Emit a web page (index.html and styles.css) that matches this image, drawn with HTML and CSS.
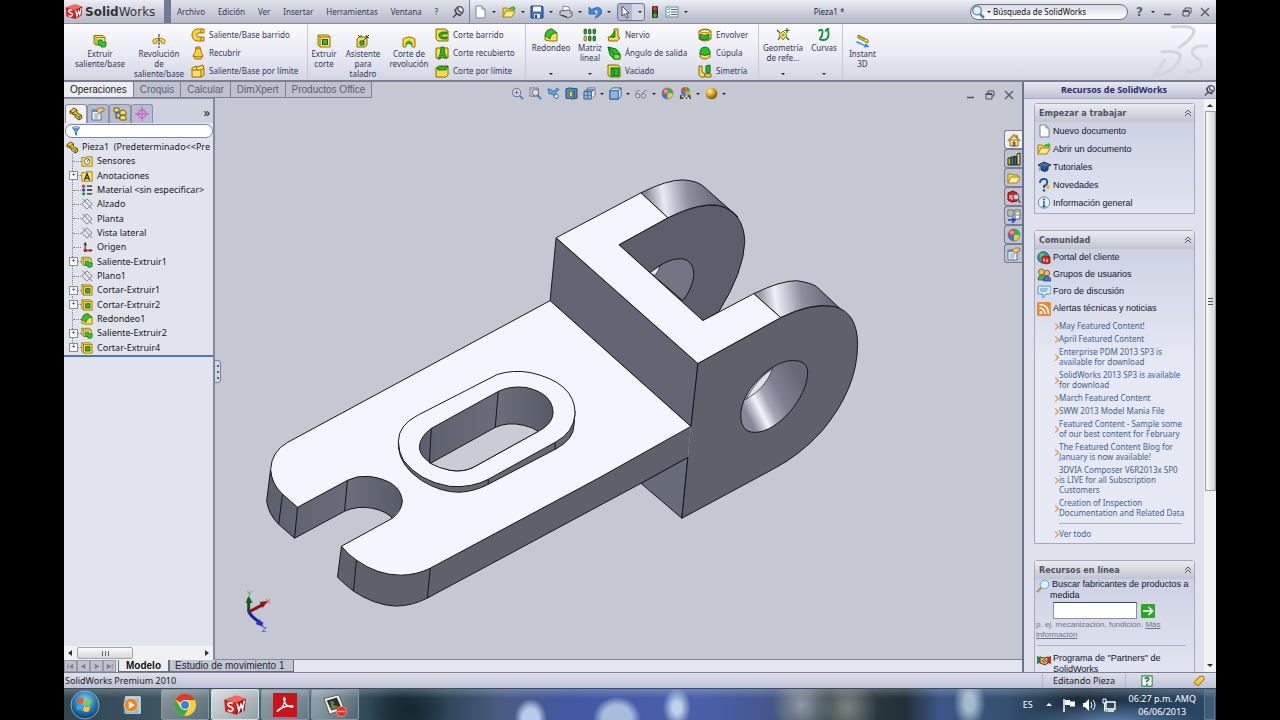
FILE: index.html
```html
<!DOCTYPE html>
<html lang="es">
<head>
<meta charset="utf-8">
<title>SolidWorks - Pieza1</title>
<link rel="stylesheet" href="styles.css">
</head>
<body>
<svg class="defs" aria-hidden="true">
  <defs>
    <linearGradient id="capA" gradientUnits="userSpaceOnUse" x1="648" y1="206" x2="722" y2="196"><stop offset="0" stop-color="#8b8d9e"/><stop offset=".22" stop-color="#e8eaf3"/><stop offset=".55" stop-color="#8d8f9f"/><stop offset="1" stop-color="#626473"/></linearGradient>
    <linearGradient id="capB" gradientUnits="userSpaceOnUse" x1="762" y1="307" x2="836" y2="297"><stop offset="0" stop-color="#9a9cac"/><stop offset=".2" stop-color="#eef0f8"/><stop offset=".55" stop-color="#8d8f9f"/><stop offset="1" stop-color="#626473"/></linearGradient>
    <linearGradient id="bore" gradientUnits="userSpaceOnUse" x1="744" y1="408" x2="800" y2="380"><stop offset="0" stop-color="#85879a"/><stop offset=".1" stop-color="#b5b7c6"/><stop offset=".22" stop-color="#f4f4fa"/><stop offset=".38" stop-color="#a3a5b5"/><stop offset=".6" stop-color="#7f8192"/><stop offset="1" stop-color="#666877"/></linearGradient>
    <linearGradient id="wall" x1="0" x2="1"><stop offset="0" stop-color="#5c5f6d"/><stop offset=".6" stop-color="#6b6d7b"/><stop offset="1" stop-color="#565966"/></linearGradient>
    <radialGradient id="orb" cx=".5" cy=".35" r=".65"><stop offset="0" stop-color="#8fd6f0"/><stop offset=".6" stop-color="#2478b5"/><stop offset="1" stop-color="#0f3863"/></radialGradient>
    <radialGradient id="gold" cx=".35" cy=".3" r=".7"><stop offset="0" stop-color="#fff3b0"/><stop offset=".5" stop-color="#d9a520"/><stop offset="1" stop-color="#7d5a0c"/></radialGradient>
  </defs>
  <symbol id="i-page" viewBox="0 0 14 14"><path d="M3 1h6l3 3v9H3z" fill="#fdfeff" stroke="#6f87a8"/><path d="M9 1v3h3" fill="#c9d9ee" stroke="#6f87a8"/></symbol>
  <symbol id="i-open" viewBox="0 0 14 14"><path d="M1 12V3h4l1 1h5v3" fill="#f2cf4a" stroke="#a58214"/><path d="M1 12l3-6h9l-3 6z" fill="#ffec86" stroke="#a58214"/><path d="M7 4q2-3 4-2V.5l3 3-3 2.500V4q-2-1-3 1z" fill="#35b82f"/></symbol>
  <symbol id="i-folder" viewBox="0 0 14 14"><path d="M1 12V3h4l1 1h5v3" fill="#f5d663" stroke="#a58214"/><path d="M1 12l3-6h9l-3 6z" fill="#fff0a0" stroke="#a58214"/></symbol>
  <symbol id="i-save" viewBox="0 0 14 14"><path d="M1 1h11l1 1v11H1z" fill="#3c6fc4" stroke="#204080"/><path d="M3 1.500h8v5H3z" fill="#f4f8ff"/><path d="M4 9h6v4H4z" fill="#dfe6f2"/><path d="M5 10h2v3H5z" fill="#204080"/></symbol>
  <symbol id="i-print" viewBox="0 0 14 14"><path d="M4 6V1l6 1 1 4z" fill="#fff" stroke="#7a8fae"/><path d="M1 6l9-1 3 2v4l-4 2-8-3z" fill="#c8cbd4" stroke="#5b5f6c"/><path d="M3 10l5 2" stroke="#333"/><path d="M10 8h2" stroke="#d7a72c" stroke-width="2"/></symbol>
  <symbol id="i-undo" viewBox="0 0 14 14"><path d="M1 2v7h7L5.500 6.500Q8 3.500 10 5q1.500 3-3 8 7-2 6.500-7.500Q12 0 3.500 4.500z" fill="#3d8cd8" stroke="#1b4f96" stroke-width=".7"/></symbol>
  <symbol id="i-cursor" viewBox="0 0 14 14"><path d="M4 1v10l2.500-2.300L8.500 13l1.700-.8-2-4H11z" fill="#fff" stroke="#444" stroke-width=".9"/></symbol>
  <symbol id="i-light" viewBox="0 0 14 14"><rect x="4" y="1" width="6" height="12" rx="1" fill="#333"/><circle cx="7" cy="3.500" r="2" fill="#e23b2c"/><circle cx="7" cy="7" r="1.300" fill="#65551b"/><circle cx="7" cy="10.500" r="2" fill="#30b932"/></symbol>
  <symbol id="i-opts" viewBox="0 0 14 14"><path d="M1 2h12v10H1z" fill="#eff6f6" stroke="#5f8d93"/><path d="M6 4.500h6M6 7h6M6 9.500h6" stroke="#4d6a80"/><path d="M2.500 4l1 1 1.500-2M2.500 7l1 1 1.500-2M2.500 10l1 1 1.500-2" fill="none" stroke="#31875a" stroke-width=".8"/></symbol>
  <symbol id="i-pin" viewBox="0 0 14 14"><circle cx="8.500" cy="5.500" r="3.800" fill="#e6e8f0" stroke="#4b4e5c" stroke-width="1.300"/><path d="M4 4q0 6 6 6.500M7 2.500q-1 4 4 5M5.500 9L2 12.500" fill="none" stroke="#4b4e5c" stroke-width="1.500"/></symbol>
  <symbol id="i-sw" viewBox="0 0 24 20"><path d="M2 5L13 1l9 3-9 4z" fill="#f2685e"/><path d="M2 5l11 3v11L3 16z" fill="#d51e1e"/><path d="M22 4l-9 4v11l8-4z" fill="#a80f12"/><path d="M10 8.500q-5-1.500-4.500 1 .5 1.600 3 2.500t1 3-4-.5" fill="none" stroke="#fff" stroke-width="1.700"/><path d="M14 8.500l1.500 7 2-6 1.500 4.500 1.500-8" fill="none" stroke="#fff" stroke-width="1.500"/></symbol>
  <symbol id="i-boss" viewBox="0 0 14 14"><path d="M1 1.500h9l2 2V11H3l-2-2z" fill="#f4e27a" stroke="#8d7313"/><path d="M1 1.500l2 2h9M3 3.500V11" fill="none" stroke="#8d7313" stroke-width=".8"/><path d="M5 6h4v2h4v4l-1 1H8v-2H5z" fill="#35c438" stroke="#137018" stroke-width=".8"/></symbol>
  <symbol id="i-cut" viewBox="0 0 14 14"><path d="M1 1h10l2 2v10H3l-2-2z" fill="#ffe25a" stroke="#8d7313"/><path d="M1 1l2 2h10M3 3v10" fill="none" stroke="#8d7313"/><rect x="5.500" y="5.500" width="5" height="5" fill="#37b63b" stroke="#4c4b10"/></symbol>
  <symbol id="i-rev" viewBox="0 0 14 14"><path d="M1 9V6q6-4 12 0v3q-2 2-3.500 0V7h-5v2Q3 11 1 9z" fill="#ffd84e" stroke="#8d6b13" stroke-width=".8"/><path d="M7 0v14" stroke="#222" stroke-dasharray="3 1"/></symbol>
  <symbol id="i-sweep" viewBox="0 0 14 14"><path d="M13 1H6Q1 2 1 7t5 6h7V9H7q-3-2 0-4h6z" fill="#ffd33a" stroke="#9b7010"/><path d="M10 1v4M10 9v4" stroke="#9b7010"/></symbol>
  <symbol id="i-loft" viewBox="0 0 14 14"><path d="M5 1h4q1 6 3 9l-2 3H4l-2-3q3-3 3-9z" fill="#ffd33a" stroke="#9b7010"/><path d="M5 2q2 2 4 0M2 10q5 2 10 0" fill="none" stroke="#9b7010"/></symbol>
  <symbol id="i-bound" viewBox="0 0 14 14"><path d="M1 4l4-2 1 1 6-2 1 4v6l-3 2H1z" fill="#ffe056" stroke="#8d6b13"/><path d="M1 6h9v7M10 6l3-2M5 2l1 4" fill="none" stroke="#8d6b13"/></symbol>
  <symbol id="i-wizard" viewBox="0 0 14 14"><path d="M1 5l2-2h8v8l-2 2H1z" fill="#f1dc55" stroke="#7d6d17"/><path d="M4 7h4v4H4z" fill="#40ad3c" stroke="#35641b"/><path d="M7 7l6-6M10 1l1 2M13 4l-2-1M2 1l2 2M5 1v2" stroke="#36362c"/></symbol>
  <symbol id="i-revcut" viewBox="0 0 14 14"><path d="M1 5q6-4 12 0v8h-3V9q-3-4-6 0v4H1z" fill="#ffd944" stroke="#9b7010"/><path d="M4 12V9q3-4 6 0v3q-3-4-6 0z" fill="#28b52c"/></symbol>
  <symbol id="i-cutsweep" viewBox="0 0 14 14"><path d="M1 1h9l3 2v10H3L1 11z" fill="#ffdc45" stroke="#806610"/><path d="M12 4H7Q3 5 4 8t4 3h4V9H8q-3-1 0-3h4z" fill="#27b52b" stroke="#0d6a16" stroke-width=".8"/></symbol>
  <symbol id="i-cutloft" viewBox="0 0 14 14"><path d="M1 2h12v10H1z" fill="#ffdc45" stroke="#806610"/><path d="M6 1h3q0 7 3 11H9L7 9l-2 4H3q3-5 3-12z" fill="#27b52b" stroke="#0d6a16" stroke-width=".8"/></symbol>
  <symbol id="i-cutbound" viewBox="0 0 14 14"><path d="M1 4l3-2h9v9l-2 2H1z" fill="#ffdc45" stroke="#806610"/><path d="M2 4l5-2 1 1 5-1-2 4H3z" fill="#27b52b" stroke="#0d6a16" stroke-width=".8"/></symbol>
  <symbol id="i-fillet" viewBox="0 0 14 14"><path d="M1 12V7q1-6 7-6l5 4v8H6z" fill="#ffe154" stroke="#8d7313"/><path d="M1 8q1-7 7-7l5 4q-6 0-7 6z" fill="#37bf35" stroke="#146c18" stroke-width=".8"/></symbol>
  <symbol id="i-pattern" viewBox="0 0 14 14"><g fill="#27a82b" stroke="#14401a" stroke-width=".7"><rect x="1" y="1" width="2.500" height="5" rx="1"/><rect x="5.500" y="1" width="2.500" height="5" rx="1"/><rect x="10" y="1" width="2.500" height="5" rx="1"/><rect x="5.500" y="8" width="2.500" height="5" rx="1"/><rect x="10" y="8" width="2.500" height="5" rx="1"/></g><rect x="1" y="8" width="2.500" height="5" rx="1" fill="#e5cf3e" stroke="#5b5210" stroke-width=".7"/></symbol>
  <symbol id="i-rib" viewBox="0 0 14 14"><path d="M7 1h4v8l2 1-3 3H2L1 9h6z" fill="#ffdc45" stroke="#806610"/><path d="M3 9l5-6v6z" fill="#27b52b" stroke="#0d6a16" stroke-width=".8"/></symbol>
  <symbol id="i-draft" viewBox="0 0 14 14"><path d="M1 1l8 2 4 5v5H7L3 9z" fill="#27c22b" stroke="#0d6a16"/><path d="M7 8l6 1v4H7z" fill="#8de04a" stroke="#0d6a16" stroke-width=".8"/><path d="M1 1l6 7" fill="none" stroke="#0d6a16"/></symbol>
  <symbol id="i-shell" viewBox="0 0 14 14"><path d="M1 1h10l2 2v10H3l-2-2z" fill="#ffdc45" stroke="#806610"/><path d="M4 4h8v8H4z" fill="#1fbd2a" stroke="#0d6a16"/><path d="M4 4l3 2v6" fill="none" stroke="#0d6a16"/></symbol>
  <symbol id="i-wrap" viewBox="0 0 14 14"><path d="M1 3q6-4 12 0v8q-6 4-12 0z" fill="#ffdc45" stroke="#806610"/><path d="M2 6q5 3 9 0v5q-5 2-9 0z" fill="#27b52b" stroke="#0d6a16" stroke-width=".8"/><ellipse cx="7" cy="3.200" rx="5" ry="1.500" fill="#fff09a" stroke="#806610" stroke-width=".7"/></symbol>
  <symbol id="i-dome" viewBox="0 0 14 14"><path d="M2 7v4q5 4 10 0V7z" fill="#ffdc45" stroke="#806610"/><path d="M2 8V5q1-4 5-4t5 4v3q-5 3-10 0z" fill="#27c22b" stroke="#0d6a16" stroke-width=".8"/></symbol>
  <symbol id="i-mirror" viewBox="0 0 14 14"><path d="M1 2h3v6l3 2v3H3l-2-2z" fill="#ffdc45" stroke="#806610"/><path d="M8 2l4-1v8H8z" fill="#27b52b" stroke="#0d6a16"/><path d="M6 10h7v3H8z" fill="#ffdc45" stroke="#806610"/></symbol>
  <symbol id="i-refgeo" viewBox="0 0 14 14"><path d="M3 7l4-4 4 4-4 5z" fill="#f3e04a" stroke="#8f8112"/><path d="M1 2l3 3M2 12l2-3M13 12l-3-3M11 0v5M8.500 2.500h5" stroke="#23612b" stroke-width="1.200"/><circle cx="7" cy="7" r="1.300" fill="#a88"/></symbol>
  <symbol id="i-curves" viewBox="0 0 14 14"><path d="M1.500 3q4-3 4 1t-2 6 3 2 5-6-2-4 1.500-1.500 3-.5" fill="none" stroke="#15903b" stroke-width="1.900"/></symbol>
  <symbol id="i-instant" viewBox="0 0 14 14"><path d="M2 1l10 5v3L2 4z" fill="#ffe154" stroke="#77651a" stroke-width=".9"/><path d="M4 2v2M6 3v2M8 4v2" stroke="#77651a"/><path d="M1 7l8 4 .5-2 4 4-6 .5 1-1.500L0 8.500z" fill="#2c8be0"/></symbol>
  <symbol id="i-zoom" viewBox="0 0 14 14"><circle cx="6" cy="6" r="4.500" fill="#d3d8e2" stroke="#5b6577"/><path d="M6 3.500v5M3.500 6h5" stroke="#6c7789"/><path d="M9.500 9.500l3.500 3.500" stroke="#3f7fc0" stroke-width="2"/></symbol>
  <symbol id="i-zoomarea" viewBox="0 0 14 14"><path d="M1 1h9v9H1z" fill="none" stroke="#555" stroke-dasharray="2 1"/><circle cx="7" cy="6" r="3.500" fill="#d9dee7" stroke="#5b6577"/><path d="M9.500 9l3.500 4" stroke="#3f7fc0" stroke-width="2"/></symbol>
  <symbol id="i-prev" viewBox="0 0 14 14"><path d="M1 2q4 0 6 3l4-4 2 2-4 3 3 5-2 2-4-5-4-1z" fill="#5ca5dc" stroke="#285e96" stroke-width=".8"/><circle cx="10" cy="10" r="2.300" fill="#d4e9f8" stroke="#285e96" stroke-width=".8"/></symbol>
  <symbol id="i-section" viewBox="0 0 14 14"><path d="M1 2l4-1 8 1v10l-4 1-8-1z" fill="#4e91c4" stroke="#25496b"/><path d="M5 4l3 1v6l-3-1z" fill="#f3d75a" stroke="#7b6719"/><path d="M10 3v9" stroke="#25496b"/></symbol>
  <symbol id="i-orient" viewBox="0 0 14 14"><path d="M5 4V1h8v8l-3 3" fill="#e6eef7" stroke="#59708a"/><path d="M1 5h8v8H1zM1 5l3-2h8L9 5" fill="#8fb8dd" stroke="#375b82"/><path d="M5 5v8M1 9h8" stroke="#375b82" stroke-width=".7"/></symbol>
  <symbol id="i-display" viewBox="0 0 14 14"><path d="M1 4l3-3h9v9l-3 3H1z" fill="#d8eafb" stroke="#33567d"/><path d="M1 4h9v9H1z" fill="#86b6e6" stroke="#33567d"/><path d="M10 4l3-3" stroke="#33567d"/></symbol>
  <symbol id="i-glasses" viewBox="0 0 14 14"><path d="M1 8Q1 3 5 4M8 8q1-5 5-4" fill="none" stroke="#777b87"/><circle cx="3" cy="9.500" r="2.300" fill="#d7dae2" stroke="#666a77"/><circle cx="9" cy="9.500" r="2.300" fill="#d7dae2" stroke="#666a77"/></symbol>
  <symbol id="i-ball" viewBox="0 0 14 14"><path d="M7 7V1a6 6 0 0 1 6 6z" fill="#3fae49"/><path d="M7 7h6a6 6 0 0 1-6 6z" fill="#f0c63c"/><path d="M7 7v6a6 6 0 0 1-6-6z" fill="#3d78cf"/><path d="M7 7H1a6 6 0 0 1 6-6z" fill="#e04436"/><circle cx="5" cy="4.500" r="2" fill="#fff" opacity=".45"/><circle cx="7" cy="7" r="6" fill="none" stroke="#5c6577" stroke-width=".6"/></symbol>
  <symbol id="i-scene" viewBox="0 0 14 14"><path d="M1 9l3-1h8l1 5H1z" fill="#444"/><path d="M3 9h2v2H3zM7 9h2v2H7zM5 11h2v2H5zM9 11h2v2H9z" fill="#fff"/><path d="M7 5V0a5 5 0 0 1 5 5z" fill="#3fae49"/><path d="M7 5h5a5 5 0 0 1-5 5z" fill="#e0a83c"/><path d="M7 5v5a5 5 0 0 1-5-5z" fill="#3d78cf"/><path d="M7 5H2a5 5 0 0 1 5-5z" fill="#e04436"/></symbol>
  <symbol id="i-goldball" viewBox="0 0 14 14"><circle cx="7" cy="7" r="6.300" fill="url(#gold)"/></symbol>
  <symbol id="i-part" viewBox="0 0 14 14"><path d="M1 4l4-3 3 2v3l4 2 1 3-3 2-4-3V8L1 6z" fill="#f3cd35" stroke="#5d4a0c"/><path d="M1 4l3 2 4-3M6 7l4 3 3-2M4 6v2M10 10v3" fill="none" stroke="#5d4a0c" stroke-width=".9"/></symbol>
  <symbol id="i-props" viewBox="0 0 14 14"><path d="M1 3h9v10H1z" fill="#f4f8ff" stroke="#4e6e9a"/><path d="M1 3h9v2H1z" fill="#5a91d2"/><path d="M3 7h5M3 9h5M3 11h4" stroke="#7f97b8"/><path d="M5 3q3-3 8-2v3q-3 0-4 2-2 1-2-1z" fill="#f4c07d" stroke="#8c5b24" stroke-width=".7"/></symbol>
  <symbol id="i-config" viewBox="0 0 14 14"><path d="M3 4v7h4M3 6h4" fill="none" stroke="#444"/><path d="M1 1h5v4H1zM7 4l4-1 2 2v3H7zM7 9l4-1 2 2v3H7z" fill="#f1dc6a" stroke="#665512" stroke-width=".9"/></symbol>
  <symbol id="i-target" viewBox="0 0 14 14"><circle cx="7" cy="7" r="4" fill="none" stroke="#d05fd4" stroke-width="1.300"/><path d="M7 0v14M0 7h14" stroke="#d05fd4" stroke-width="1.300"/></symbol>
  <symbol id="i-filter" viewBox="0 0 14 14"><path d="M2 2h10L8 8v5l-2-1V8z" fill="#62a6e4" stroke="#24619f"/><ellipse cx="7" cy="2.500" rx="5" ry="1.500" fill="#cde5fa" stroke="#24619f"/></symbol>
  <symbol id="i-sensor" viewBox="0 0 14 14"><path d="M1 3h4l1-1h7v11H1z" fill="#f7df74" stroke="#94791a"/><circle cx="7" cy="7.500" r="3.300" fill="#fffbe6" stroke="#555"/><path d="M7 8l2-3" stroke="#333"/></symbol>
  <symbol id="i-annot" viewBox="0 0 14 14"><path d="M1 3h4l1-1h7v11H1z" fill="#ffe55e" stroke="#94791a"/><path d="M4 12l3-8 3 8M5.200 9.500h3.600" fill="none" stroke="#222" stroke-width="1.400"/></symbol>
  <symbol id="i-material" viewBox="0 0 14 14"><circle cx="3" cy="2.500" r="2" fill="#d83a36"/><circle cx="3" cy="7" r="2" fill="#3c49cf"/><circle cx="3" cy="11.500" r="2" fill="#2d9c3c"/><path d="M7 2.500h6M7 7h6M7 11.500h6" stroke="#222" stroke-width="1.500"/></symbol>
  <symbol id="i-plane" viewBox="0 0 14 14"><path d="M7 1l6 6-6 6-6-6zM2 1l11 12" fill="none" stroke="#6d7280"/></symbol>
  <symbol id="i-origin" viewBox="0 0 14 14"><path d="M5 11V2M5 11h8" stroke="#a51c2d" stroke-width="1.400" fill="none"/><path d="M3 5l2-4 2 4z" fill="#333"/><circle cx="5" cy="11" r="2" fill="#b31d2e"/><path d="M10 9l4 2-4 2z" fill="#a51c2d"/></symbol>
  <symbol id="i-home" viewBox="0 0 14 14"><path d="M3 7h8v6H3z" fill="#fff2b0" stroke="#8d6b13"/><path d="M1 8l6-6 6 6" fill="none" stroke="#c7902a" stroke-width="2"/><path d="M6 9h2v4H6zM10 2v3" stroke="#8d4a13" fill="#c77"/></symbol>
  <symbol id="i-books" viewBox="0 0 14 14"><path d="M1 6h3v7H1z" fill="#d6c22d" stroke="#222"/><path d="M4 5h3v8H4z" fill="#2d9c3c" stroke="#222"/><path d="M7 4l3 1v8H7z" fill="#3c62b0" stroke="#222"/><path d="M10 2l3-1v12h-3z" fill="#e1d370" stroke="#222"/></symbol>
  <symbol id="i-swsearch" viewBox="0 0 14 14"><path d="M1 3l5-2 4 2v8l-5 1-4-2z" fill="#cf2424" stroke="#7b0d0d"/><path d="M3 5v4M5 5v5" stroke="#fff"/><circle cx="9" cy="7" r="3" fill="#e7eef8" fill-opacity=".8" stroke="#555"/><path d="M11 9l2 4" stroke="#555" stroke-width="1.600"/></symbol>
  <symbol id="i-views" viewBox="0 0 14 14"><path d="M1 1h5v6H1zM8 1h5v9H8z" fill="#fff" stroke="#555d52"/><path d="M2 3h3M2 5h3M9 3h3M9 6h3" stroke="#678258"/><path d="M1 11h6M5 9l3 2-3 3" fill="none" stroke="#1c3ebd" stroke-width="1.500"/></symbol>
  <symbol id="i-grad" viewBox="0 0 14 14"><path d="M1 5l6-3 7 3-6 3z" fill="#3d6cb4" stroke="#1c3565"/><path d="M4 7v3q4 3 7 0V6" fill="#2b4f8c" stroke="#1c3565"/><path d="M3 6l-1 5" stroke="#c9962a"/></symbol>
  <symbol id="i-help" viewBox="0 0 14 14"><path d="M3 5q0-4 4-4t3 4q0 2-3 3v2" fill="none" stroke="#27549c" stroke-width="2"/><circle cx="7" cy="12.500" r="1.300" fill="#27549c"/><circle cx="11" cy="9" r="2" fill="#f2b53b"/></symbol>
  <symbol id="i-info" viewBox="0 0 14 14"><circle cx="7" cy="6.500" r="5.700" fill="#e6f1fb" stroke="#5c8dc0"/><path d="M7 6v4.500M6 6h1.500M5.500 10.500h3" stroke="#1f4b9a" stroke-width="1.300"/><circle cx="7" cy="3.600" r="1" fill="#1f4b9a"/></symbol>
  <symbol id="i-globe" viewBox="0 0 14 14"><circle cx="6.500" cy="6.500" r="5.700" fill="#3b9ca8" stroke="#244d6c"/><path d="M2 4q3-3 5-1L5 7z" fill="#79c54c"/><path d="M5 6l4-1 4 1v6l-4 1-4-2z" fill="#d22a25" stroke="#8a1111" stroke-width=".8"/><path d="M7 7.500v3M10 8v3" stroke="#fff"/></symbol>
  <symbol id="i-users" viewBox="0 0 14 14"><circle cx="4.500" cy="4" r="3" fill="#f2c34f" stroke="#8d6b13"/><path d="M1 12q0-5 4-5t4 5z" fill="#5aa354" stroke="#326c2e" stroke-width=".8"/><circle cx="10" cy="5" r="2.700" fill="#f0bb77" stroke="#7d4f1c" stroke-width=".8"/><path d="M6.500 13q0-5 3.500-5t4 5z" fill="#3f75c4" stroke="#234a85" stroke-width=".8"/></symbol>
  <symbol id="i-chat" viewBox="0 0 14 14"><path d="M2 1h10q2 0 2 2v5q0 1-2 1H9l-3 4V9H2Q1 9 1 8V3q0-2 1-2z" fill="#d6ecfb" stroke="#5794c4"/><path d="M3 4h8M3 6h7" stroke="#5794c4"/></symbol>
  <symbol id="i-rss" viewBox="0 0 14 14"><rect width="14" height="14" rx="1.500" fill="#e8893b"/><circle cx="4" cy="10.500" r="1.500" fill="#fff"/><path d="M2.500 6q5 0 5.500 6M2.500 2.500q9 0 9 9.500" fill="none" stroke="#fff" stroke-width="1.600"/></symbol>
  <symbol id="i-mag" viewBox="0 0 14 14"><path d="M1 13l5-5" stroke="#c58b38" stroke-width="2.200"/><circle cx="8.500" cy="5.500" r="4.300" fill="#d5efff" stroke="#6aa3cb"/></symbol>
  <symbol id="i-magr" viewBox="0 0 14 14"><path d="M13 13L9 9" stroke="#4b7fa8" stroke-width="2.500"/><circle cx="6" cy="5.500" r="4.300" fill="#e6f3ff" stroke="#4b7fa8" stroke-width="1.200"/></symbol>
  <symbol id="i-shake" viewBox="0 0 14 14"><path d="M0 3l3 1v6l-3 1z" fill="#2a8b45"/><path d="M14 3l-3 1v6l3 1z" fill="#c1332c"/><path d="M3 4l4 1 4-1v6l-3 2-5-2z" fill="#e5ad6b" stroke="#633d12"/><path d="M5 7l3 3M7 6l3 3" stroke="#633d12"/></symbol>
  <symbol id="i-go" viewBox="0 0 14 14"><rect width="14" height="14" rx="1" fill="#2fa52f"/><path d="M2 7h9M7.500 3l4 4-4 4" fill="none" stroke="#fff" stroke-width="1.700"/></symbol>
  <symbol id="i-chev" viewBox="0 0 8 8"><path d="M1 4l3-3 3 3M1 7l3-3 3 3" fill="none" stroke="#4f5261"/></symbol>
  <symbol id="i-min" viewBox="0 0 10 10"><path d="M1 7.500h7" stroke="#4f5261" stroke-width="1.500"/></symbol>
  <symbol id="i-restore" viewBox="0 0 10 10"><path d="M3 3V1h6v5H7M1 3.500h6V9H1zM1 4.500h6" fill="none" stroke="#4f5261"/></symbol>
  <symbol id="i-close" viewBox="0 0 10 10"><path d="M1 1l8 8M9 1L1 9" stroke="#5c5f6e" stroke-width="1.500"/></symbol>
  <symbol id="i-first" viewBox="0 0 10 10"><path d="M2 2v6" stroke="#7d8192"/><path d="M8 2v6L3 5z" fill="#7d8192"/></symbol>
  <symbol id="i-prevt" viewBox="0 0 10 10"><path d="M7 2v6L2 5z" fill="#7d8192"/></symbol>
  <symbol id="i-tag" viewBox="0 0 14 14"><path d="M1 9l6-7 5-1 1 4-6 7q-3 1-6-3z" fill="#f3bd2b" stroke="#8d6410"/><path d="M4 9l5-5M6 10l4-5" stroke="#fbe38f"/><circle cx="11" cy="3" r="1" fill="#fff"/></symbol>
  <symbol id="i-qgreen" viewBox="0 0 14 14"><path d="M1 1h12v12H1z" fill="#fff" stroke="#2c8a4b" stroke-width="1.300"/><path d="M5 5q0-2 2-2t2 2q0 1-2 2v1.500" fill="none" stroke="#178a3a" stroke-width="2"/><circle cx="7" cy="11" r="1.200" fill="#178a3a"/></symbol>
  <symbol id="i-start" viewBox="0 0 30 30"><circle cx="15" cy="15" r="14" fill="url(#orb)" stroke="#9fc4dc" stroke-width=".8"/><path d="M8 9q3-2 6 0l-1 5q-3-2-6 0z" fill="#ef5a2a"/><path d="M15.500 9.500q3 2 6.500 0l-1.500 5q-3 1.500-6-.5z" fill="#8cc63f"/><path d="M7 15.500q3-2 6 0l-1 5q-3-2-6 0z" fill="#37a7e0"/><path d="M14.200 16q3 2 6 .3l-1.300 5q-3 1.500-6-.5z" fill="#fbc42d"/></symbol>
  <symbol id="i-wmp" viewBox="0 0 24 24"><path d="M5 3h16v18H5z" fill="#a7d3ea" stroke="#d4eefa"/><path d="M3 5h16v16H3z" fill="#6eb2d8" opacity=".7"/><circle cx="11" cy="12" r="7.500" fill="#f08422" stroke="#fbd3a0"/><path d="M8.500 8v8l6.500-4z" fill="#fff"/></symbol>
  <symbol id="i-chrome" viewBox="0 0 24 24"><circle cx="12" cy="12" r="11" fill="#f7cf3a"/><path d="M12 12L2.500 6.500A11 11 0 0 1 22 7H12z" fill="#dd3b2d"/><path d="M2.500 6.500A11 11 0 0 0 11 23l5-8.500-4 2.500-5-3z" fill="#3ea548"/><circle cx="12" cy="12" r="5" fill="#fff"/><circle cx="12" cy="12" r="4" fill="#3c7fd3"/></symbol>
  <symbol id="i-pdf" viewBox="0 0 24 24"><path d="M0 0h24v24H0z" fill="#c9141b"/><path d="M5 18c4-2 7-8 7-12 0-2-2-2-1 1 1 4 4 7 8 7 2 0 1-2-2-1-5 0-9 2-12 4-1 1-1 2 0 1z" fill="none" stroke="#fff" stroke-width="1.300"/></symbol>
  <symbol id="i-rec" viewBox="0 0 26 26"><path d="M1 6L17 2l6 15L7 23z" fill="#f2f3ee" stroke="#555"/><path d="M4 8l11-3 5 11-11 3z" fill="#2c3020"/><path d="M8 8l5 2-2 3 6 1-3 3-5 1z" fill="#6b7f43"/><circle cx="20" cy="20" r="5.500" fill="#e23327" stroke="#f3a59e" stroke-width=".8"/><path d="M16 20h8" stroke="#f7b3ac" stroke-width="1.500"/></symbol>
  <symbol id="i-flag" viewBox="0 0 14 14"><path d="M2 1v13" stroke="#fff" stroke-width="1.500"/><path d="M3 2h5v1.500h5v5H8V7H3z" fill="#fff"/></symbol>
  <symbol id="i-vol" viewBox="0 0 14 14"><path d="M1 5h2l4-4v12L3 9H1z" fill="#fff"/><path d="M9 4q2 3 0 6M11 2q4 5 0 10" fill="none" stroke="#fff"/></symbol>
  <symbol id="i-net" viewBox="0 0 14 14"><path d="M4 4h9v7H4zM6 13h6" fill="none" stroke="#fff" stroke-width="1.400"/><path d="M1 1h3v4H1zM2.500 5v8H6" fill="none" stroke="#fff"/></symbol>
</svg>

<div class="screen">
  <header class="titlebar">
    <div class="brand"><svg class="brandicon"><use href="#i-sw"/></svg><span><b>Solid</b>Works</span></div>
    <nav class="menu">
      <button>Archivo</button><button>Edición</button><button>Ver</button><button>Insertar</button><button>Herramientas</button><button>Ventana</button><button>?</button>
      <button aria-label="Fijar menú"><svg class="ic"><use href="#i-pin"/></svg></button>
    </nav>
    <div class="quick">
      <button aria-label="Nuevo"><svg class="ic"><use href="#i-page"/></svg><i class="dd"></i></button>
      <button aria-label="Abrir"><svg class="ic"><use href="#i-open"/></svg><i class="dd"></i></button>
      <button aria-label="Guardar"><svg class="ic"><use href="#i-save"/></svg><i class="dd"></i></button>
      <button aria-label="Imprimir"><svg class="ic"><use href="#i-print"/></svg><i class="dd"></i></button>
      <button aria-label="Deshacer"><svg class="ic"><use href="#i-undo"/></svg><i class="dd"></i></button>
      <button class="active" aria-label="Seleccionar"><svg class="ic"><use href="#i-cursor"/></svg><i class="dd"></i></button>
      <button class="solo" aria-label="Reconstruir"><svg class="ic"><use href="#i-light"/></svg></button>
      <button aria-label="Opciones"><svg class="ic"><use href="#i-opts"/></svg><i class="dd"></i></button>
    </div>
    <div class="doctitle">Pieza1 *</div>
    <label class="search"><svg class="searchicon"><use href="#i-magr"/></svg><i class="dd"></i><input type="text" aria-label="Búsqueda" value="Búsqueda de SolidWorks"></label>
    <div class="winbtns">
      <button class="q">?</button><button aria-label="Menú de ayuda"><i class="dd"></i></button>
      <button aria-label="Minimizar"><svg><use href="#i-min"/></svg></button><button aria-label="Restaurar"><svg><use href="#i-restore"/></svg></button><button aria-label="Cerrar"><svg><use href="#i-close"/></svg></button>
    </div>
  </header>

  <div class="ribbon">
    <button class="big w72"><svg class="ic"><use href="#i-boss"/></svg><span>Extruir<br>saliente/base</span></button>
    <button class="big w48"><svg class="ic"><use href="#i-rev"/></svg><span>Revolución<br>de<br>saliente/base</span></button>
    <div class="trio t1">
      <button><svg class="ic"><use href="#i-sweep"/></svg>Saliente/Base barrido</button>
      <button><svg class="ic"><use href="#i-loft"/></svg>Recubrir</button>
      <button><svg class="ic"><use href="#i-bound"/></svg>Saliente/Base por límite</button>
    </div>
    <button class="big w32"><svg class="ic"><use href="#i-cut"/></svg><span>Extruir<br>corte</span></button>
    <button class="big w48"><svg class="ic"><use href="#i-wizard"/></svg><span>Asistente<br>para<br>taladro</span></button>
    <button class="big w48"><svg class="ic"><use href="#i-revcut"/></svg><span>Corte de<br>revolución</span></button>
    <div class="trio t2">
      <button><svg class="ic"><use href="#i-cutsweep"/></svg>Corte barrido</button>
      <button><svg class="ic"><use href="#i-cutloft"/></svg>Corte recubierto</button>
      <button><svg class="ic"><use href="#i-cutbound"/></svg>Corte por límite</button>
    </div>
    <button class="big drop w48"><svg class="ic"><use href="#i-fillet"/></svg><span>Redondeo</span><i class="dd"></i></button>
    <button class="big drop w32"><svg class="ic"><use href="#i-pattern"/></svg><span>Matriz<br>lineal</span><i class="dd"></i></button>
    <div class="trio t3">
      <button><svg class="ic"><use href="#i-rib"/></svg>Nervio</button>
      <button><svg class="ic"><use href="#i-draft"/></svg>Ángulo de salida</button>
      <button><svg class="ic"><use href="#i-shell"/></svg>Vaciado</button>
    </div>
    <div class="trio t4">
      <button><svg class="ic"><use href="#i-wrap"/></svg>Envolver</button>
      <button><svg class="ic"><use href="#i-dome"/></svg>Cúpula</button>
      <button><svg class="ic"><use href="#i-mirror"/></svg>Simetría</button>
    </div>
    <button class="big drop w48"><svg class="ic"><use href="#i-refgeo"/></svg><span>Geometría<br>de refe...</span><i class="dd"></i></button>
    <button class="big drop curves w32"><svg class="ic"><use href="#i-curves"/></svg><span>Curvas</span><i class="dd"></i></button>
    <button class="big w40"><svg class="ic"><use href="#i-instant"/></svg><span>Instant<br>3D</span></button>
    <svg class="dslogo" viewBox="0 0 60 54"><g fill="none" stroke="#d2d4df" stroke-width="3"><path d="M22 2Q44 0 45 6 44 14 29 23"/><path d="M12 27Q34 25 31 33 27 46 5 52L16 34"/><path d="M59 21Q44 20 43 27 44 32 51 35 57 46 37 47"/></g></svg>
  </div>

  <main class="work">
    <section class="doc">
      <div class="cmdtabs"><button class="on">Operaciones</button><button>Croquis</button><button>Calcular</button><button>DimXpert</button><button>Productos Office</button></div>
      <div class="docrow">
        <aside class="tree">
          <div class="treetabs">
            <button class="on" aria-label="Gestor de diseño"><svg class="ic"><use href="#i-part"/></svg></button><button aria-label="Propiedades"><svg class="ic"><use href="#i-props"/></svg></button><button aria-label="Configuraciones"><svg class="ic"><use href="#i-config"/></svg></button><button aria-label="DimXpert"><svg class="ic"><use href="#i-target"/></svg></button><span>»</span>
          </div>
          <label class="filter"><svg><use href="#i-filter"/></svg><input type="text" aria-label="Filtrar"></label>
          <div class="root"><svg class="ic"><use href="#i-part"/></svg>Pieza1&nbsp; (Predeterminado&lt;&lt;Pre</div>
          <ul class="nodes">
            <li><svg><use href="#i-sensor"/></svg>Sensores</li>
            <li class="plus"><svg><use href="#i-annot"/></svg>Anotaciones</li>
            <li><svg><use href="#i-material"/></svg>Material &lt;sin especificar&gt;</li>
            <li><svg><use href="#i-plane"/></svg>Alzado</li>
            <li><svg><use href="#i-plane"/></svg>Planta</li>
            <li><svg><use href="#i-plane"/></svg>Vista lateral</li>
            <li><svg><use href="#i-origin"/></svg>Origen</li>
            <li class="plus"><svg><use href="#i-boss"/></svg>Saliente-Extruir1</li>
            <li><svg><use href="#i-plane"/></svg>Plano1</li>
            <li class="plus"><svg><use href="#i-cut"/></svg>Cortar-Extruir1</li>
            <li class="plus"><svg><use href="#i-cut"/></svg>Cortar-Extruir2</li>
            <li><svg><use href="#i-fillet"/></svg>Redondeo1</li>
            <li class="plus"><svg><use href="#i-boss"/></svg>Saliente-Extruir2</li>
            <li class="plus"><svg><use href="#i-cut"/></svg>Cortar-Extruir4</li>
          </ul>
          <div class="hscroll"><i class="la"></i><span></span><i class="ra"></i></div>
          <i class="grip"></i>
        </aside>
        <div class="view">
          <svg class="model" viewBox="215 98 807 562" preserveAspectRatio="xMidYMid meet" role="img" aria-label="Pieza1">
            <g stroke="#16171c" stroke-width="1" stroke-linejoin="round">
              <path d="M619 245L668 218Q700 202 720 206Q744 213 745 242Q744 272 719 312L703 321Z" fill="#5c5f6b"/>
              <path d="M650 273Q668 258 682 259Q694 261 694 275Q693 288 683 301Z" fill="#737585"/>
              <path d="M650 273L660 266Q659 271 655 276Z" fill="#e1e3eb" stroke-width=".7"/>
              <path d="M641 193Q667 180 683 180Q697 181 703 186L738 217Q726 204 710 205Q692 206 668 218Z" fill="url(#capA)"/>
              <path d="M754 294Q781 281 797 281Q811 283 817 287L850 318Q839 306 823 306Q806 306 781 318Z" fill="url(#capB)"/>
              <path d="M641 484L688 458L682 519Z" fill="#686b79"/>
              <path d="M691 427L688 458L641 484L427 599Q411 607 395 607Q374 606 353 592Q344 585 337 578L341 547L430 540Z" fill="#5e616c" stroke="none"/>
              <path d="M688 458L641 484L427 599Q411 607 395 607Q374 606 353 592Q344 585 337 578L341 547" fill="none"/>
              <path d="M698 364L781 318Q812 303 835 307Q858 313 858 345Q858 389 822 432Q800 456 773 470L682 519L688 458L691 427Z" fill="#5e616c" stroke="none"/>
              <path d="M691 427L698 364L781 318Q812 303 835 307Q858 313 858 345Q858 389 822 432Q800 456 773 470L682 519L688 458" fill="none"/>
              <path d="M741 415C741 428 746 433 755 433C778 433 808 398 808 373C808 365 803 361 793 361C770 361 741 393 741 415Z" fill="url(#bore)"/>
              <path d="M746 400Q758 378 773 369Q766 389 746 400Z" fill="#dfe1e9" stroke-width=".7"/>
              <path d="M556 238L550 301L691 427L698 364Z" fill="#636574"/>
              <path d="M556 238L641 193L668 218L619 245L703 321L754 294L781 318L698 364Z" fill="#f3f6ff"/>
              <path d="M270 470L266 502Q268 515 278 525L294 539L344 512Q357 506 372 509Q386 512 392 519L406 502V470Z" fill="url(#wall)" stroke="none"/>
              <path d="M270 470L266 502Q268 515 278 525L294 539L344 512Q357 506 372 509Q386 512 392 519" fill="none"/>
              <path d="M550 301L287 443Q271 452 270 470Q271 485 282 495Q290 502 297 508L347 481Q357 476 368 477Q400 481 402 502Q401 512 392 519L341 547Q347 555 356 561Q377 576 400 576Q416 576 430 569L600 478L691 427Z" fill="#f3f6ff"/>
              <path d="M282 495L278 525M297 508L294 539M347 481L344 512M356 561L353 592M430 569L427 599" fill="none"/>
              <path d="M398 442V448Q400 467 421 481Q440 493 459 493Q475 492 488 485L555 450Q574 440 574 425L575 412Z" fill="#666873"/>
              <path d="M417 416L497 375Q513 370 530 373Q575 383 575 414Q574 433 555 443L488 480Q471 489 449 487Q419 482 403 461Q398 452 398 442Q398 426 417 416Z" fill="#f3f6ff"/>
              <path d="M431 429L498 392Q510 386 526 388Q553 394 553 414Q552 425 538 432L473 468Q463 473 450 471Q419 463 419 447Q420 437 431 429Z" fill="url(#wall)"/>
              <path d="M430 464L495 428Q508 422 524 426Q533 428 538 432L473 468Q463 473 450 471Q439 469 430 464Z" fill="#c9cbd5"/>
              <path d="M431 429L429 464M498 392L495 428M555 443V450M488 480V485" fill="none"/>
            </g>
            <g stroke-width="3" fill="none"><path d="M248 613V599" stroke="#14531e"/><path d="M248 613L263 605" stroke="#8d1717"/><path d="M248 613Q253 620 262 625" stroke="#1c1f9c"/></g>
            <path d="M245 604l3-7 4 7z" fill="#14601e"/><path d="M259 603l8-1-5 7z" fill="#8d1717"/><path d="M259 620l4 8-8-3z" fill="#2d30c4"/>
            <g font-family="Liberation Sans, sans-serif" font-size="8"><text x="246" y="597" fill="#3b9a4b">Y</text><text x="265" y="605" fill="#e0444f">X</text><text x="261" y="633" fill="#3b3fe0">Z</text></g>
          </svg>
          <div class="hud">
            <button aria-label="Zoom para ajustar"><svg class="ic"><use href="#i-zoom"/></svg></button><button aria-label="Zoom encuadre"><svg class="ic"><use href="#i-zoomarea"/></svg></button><button aria-label="Vista previa"><svg class="ic"><use href="#i-prev"/></svg></button><button aria-label="Vista de sección"><svg class="ic"><use href="#i-section"/></svg></button><button aria-label="Orientación"><svg class="ic"><use href="#i-orient"/></svg><i class="dd"></i></button><button aria-label="Visualización"><svg class="ic"><use href="#i-display"/></svg><i class="dd"></i></button><button aria-label="Ocultar"><svg class="ic"><use href="#i-glasses"/></svg><i class="dd"></i></button><button aria-label="Apariencia"><svg class="ic"><use href="#i-ball"/></svg></button><button aria-label="Escena"><svg class="ic"><use href="#i-scene"/></svg><i class="dd"></i></button><button aria-label="Vista"><svg class="ic"><use href="#i-goldball"/></svg><i class="dd"></i></button>
          </div>
          <div class="docbtns"><button aria-label="Minimizar documento"><svg><use href="#i-min"/></svg></button><button aria-label="Restaurar documento"><svg><use href="#i-restore"/></svg></button><button aria-label="Cerrar documento"><svg><use href="#i-close"/></svg></button></div>
          <div class="sidetabs">
            <button class="on" aria-label="Recursos"><svg class="ic"><use href="#i-home"/></svg></button><button aria-label="Biblioteca"><svg class="ic"><use href="#i-books"/></svg></button><button aria-label="Explorador"><svg class="ic"><use href="#i-folder"/></svg></button><button aria-label="Buscar"><svg class="ic"><use href="#i-swsearch"/></svg></button><button aria-label="Paleta de vistas"><svg class="ic"><use href="#i-views"/></svg></button><button aria-label="Apariencias"><svg class="ic"><use href="#i-ball"/></svg></button><button aria-label="Propiedades personalizadas"><svg class="ic"><use href="#i-props"/></svg></button>
          </div>
        </div>
      </div>
      <div class="sheets">
        <button class="nav" aria-label="Primera"><svg><use href="#i-first"/></svg></button><button class="nav" aria-label="Anterior"><svg><use href="#i-prevt"/></svg></button><button class="nav flip" aria-label="Siguiente"><svg><use href="#i-prevt"/></svg></button><button class="nav flip" aria-label="Última"><svg><use href="#i-first"/></svg></button>
        <button class="sheet on">Modelo</button><button class="sheet">Estudio de movimiento 1</button>
      </div>
    </section>

    <aside class="pane">
      <h1>Recursos de SolidWorks<svg class="ic"><use href="#i-pin"/></svg></h1>
      <div class="panebody">
        <div class="groups">
          <section class="group">
            <h2>Empezar a trabajar<svg><use href="#i-chev"/></svg></h2>
            <ul class="links">
              <li><a href="#"><svg class="ic"><use href="#i-page"/></svg>Nuevo documento</a></li>
              <li><a href="#"><svg class="ic"><use href="#i-open"/></svg>Abrir un documento</a></li>
              <li><a href="#"><svg class="ic"><use href="#i-grad"/></svg>Tutoriales</a></li>
              <li><a href="#"><svg class="ic"><use href="#i-help"/></svg>Novedades</a></li>
              <li><a href="#"><svg class="ic"><use href="#i-info"/></svg>Información general</a></li>
            </ul>
          </section>
          <section class="group">
            <h2>Comunidad<svg><use href="#i-chev"/></svg></h2>
            <ul class="links tight">
              <li><a href="#"><svg class="ic"><use href="#i-globe"/></svg>Portal del cliente</a></li>
              <li><a href="#"><svg class="ic"><use href="#i-users"/></svg>Grupos de usuarios</a></li>
              <li><a href="#"><svg class="ic"><use href="#i-chat"/></svg>Foro de discusión</a></li>
              <li><a href="#"><svg class="ic"><use href="#i-rss"/></svg>Alertas técnicas y noticias</a></li>
            </ul>
            <ul class="news">
              <li><a href="#">May Featured Content!</a></li>
              <li><a href="#">April Featured Content</a></li>
              <li><a href="#">Enterprise PDM 2013 SP3 is<br>available for download</a></li>
              <li><a href="#">SolidWorks 2013 SP3 is available<br>for download</a></li>
              <li><a href="#">March Featured Content</a></li>
              <li><a href="#">SWW 2013 Model Mania File</a></li>
              <li><a href="#">Featured Content - Sample some<br>of our best content for February</a></li>
              <li><a href="#">The Featured Content Blog for<br>January is now available!</a></li>
              <li><a href="#">3DVIA Composer V6R2013x SP0<br>is LIVE for all Subscription<br>Customers</a></li>
              <li><a href="#">Creation of Inspection<br>Documentation and Related Data</a></li>
              <li class="all"><a href="#">Ver todo</a></li>
            </ul>
          </section>
          <section class="group">
            <h2>Recursos en línea<svg><use href="#i-chev"/></svg></h2>
            <form class="vendor">
              <label for="vendor"><svg class="ic"><use href="#i-mag"/></svg>Buscar fabricantes de productos a medida</label>
              <div class="vrow"><input id="vendor" type="text"><button type="button" aria-label="Ir"><svg class="ic"><use href="#i-go"/></svg></button></div>
              <p>p. ej. mecanización, fundición. <a href="#">Más información</a></p>
            </form>
            <a class="partners" href="#"><svg class="ic"><use href="#i-shake"/></svg><span>Programa de "Partners" de SolidWorks</span></a>
          </section>
        </div>
        <div class="vscroll"><i class="ua"></i><span></span><i class="da"></i></div>
      </div>
    </aside>
  </main>

  <footer class="status"><span>SolidWorks Premium 2010</span><span class="mode">Editando Pieza</span><svg class="ic"><use href="#i-qgreen"/></svg><svg class="ic tag"><use href="#i-tag"/></svg></footer>

  <div class="taskbar">
    <button class="start" aria-label="Inicio"><svg><use href="#i-start"/></svg></button>
    <button class="wmp" aria-label="Reproductor"><svg><use href="#i-wmp"/></svg></button>
    <button class="app" aria-label="Chrome"><svg><use href="#i-chrome"/></svg></button>
    <button class="app lit" aria-label="SolidWorks"><svg><use href="#i-sw"/></svg></button>
    <button class="app" aria-label="Adobe Reader"><svg><use href="#i-pdf"/></svg></button>
    <button class="app" aria-label="Grabadora"><svg><use href="#i-rec"/></svg></button>
    <div class="tray"><span class="lang">ES</span><i class="up"></i><svg class="ic"><use href="#i-flag"/></svg><svg class="ic"><use href="#i-vol"/></svg><svg class="ic"><use href="#i-net"/></svg><time>06:27 p.m. AMQ<br>06/06/2013</time><button class="desk" aria-label="Mostrar escritorio"></button></div>
  </div>
</div>
</body>
</html>
```
FILE: styles.css
```css
* { box-sizing: border-box; }
body { margin: 0; background: #000; color: #23263c; font: 8px/10px "Noto Sans", sans-serif; }
button, input { font: inherit; color: inherit; padding: 0; margin: 0; border: 0; background: none; }
ul { list-style: none; margin: 0; padding: 0; }
a { color: inherit; text-decoration: none; }
svg { display: block; flex: none; }
.defs { position: absolute; width: 0; height: 0; }
.ic { width: 14px; height: 14px; }
.dd { display: block; border: 2px solid transparent; border-top-color: #222; border-bottom: 0; flex: none; }
.screen { display: flex; flex-direction: column; height: 100vh; padding: 0 5%; overflow: hidden; }

/* Title bar */
.titlebar { display: flex; align-items: center; flex: none; height: 24px; background: linear-gradient(#eceef5, #c8cad9 60%, #b7bacb); border-bottom: 1px solid #8b8ea2; white-space: nowrap; }
.brand { display: flex; align-items: center; gap: 1px; flex: none; width: 107px; height: 100%; border-right: 7px solid #747896; font: 12px/20px "DejaVu Sans", sans-serif; color: #333; }
.brandicon { width: 20px; height: 17px; }
.menu { display: flex; align-items: center; justify-content: space-between; flex: none; width: 299px; height: 100%; padding: 0 4px 0 6px; border-right: 1px solid #7f8296; background: linear-gradient(#dfe1ea, #b9bbcb); color: #35375a; }
.quick { display: flex; align-items: center; flex: none; width: 224px; padding-left: 3px; }
.quick button { display: flex; align-items: center; gap: 5px; width: 29px; height: 18px; }
.quick .active { gap: 6px; border: 1px solid #70749a; border-radius: 3px; background: linear-gradient(90deg, #b3b6d2 55%, #d4d6e4 55%); }
.quick .solo { width: 20px; padding-left: 3px; }
.doctitle { flex: 1; margin: 0 54px 0 48px; text-align: center; }
.search { display: flex; align-items: center; gap: 2px; width: 158px; height: 16px; margin-right: 8px; border: 1px solid #6f7284; border-radius: 8px; background: linear-gradient(#d8dae6, #fff); }
.searchicon { width: 14px; height: 14px; }
.search input { flex: 1; min-width: 0; color: #111; }
.winbtns { display: flex; align-items: center; justify-content: space-between; width: 80px; padding-right: 6px; }
.winbtns svg, .docbtns svg { width: 10px; height: 10px; }
.q { font: bold 12px "DejaVu Sans", sans-serif; color: #5d6070; }

/* Ribbon */
.ribbon { display: flex; flex: none; height: 58px; border-bottom: 2px solid #7c7f90; background: linear-gradient(#fbfbfe, #e9eaf2 55%, #d3d5e2); color: #34365c; white-space: nowrap; }
.big { display: flex; flex-direction: column; align-items: center; gap: 1px; padding-top: 10px; flex: none; }
.big > span { display: block; }
.big.drop { padding-top: 4px; }
.big .dd { margin-top: auto; margin-bottom: 5px; }
.w72 { width: 72px; }
.w48 { width: 46px; }
.w40 { width: 40px; border-left: 1px solid #c6c8d6; }
.w32 { width: 32px; }
.curves { margin: 0 2px; }
.trio { display: grid; grid-template-rows: repeat(3, 18px); align-content: start; padding-top: 2px; flex: none; }
.trio button { display: flex; align-items: center; gap: 4px; text-align: left; }
.t1 { width: 126px; padding-left: 9px; border-right: 1px solid #c6c8d6; }
.t2 { width: 94px; padding-left: 3px; border-right: 1px solid #c6c8d6; margin-right: 2px; }
.t3 { width: 92px; padding-left: 1px; }
.t4 { width: 61px; border-right: 1px solid #c6c8d6; margin-right: 1px; }
.dslogo { width: 60px; height: 54px; margin: 1px 7px 0 auto; }

/* Work area */
.work { display: flex; flex: 1; min-height: 0; background: #c5c8d3; }
.doc { display: flex; flex-direction: column; flex: 1; min-width: 0; }
.cmdtabs { display: flex; height: 16px; flex: none; font: 10px/14px "Liberation Sans", Arial, sans-serif; }
.cmdtabs button { padding: 0 6px; border: 1px solid #7d8090; border-top: 0; border-left: 0; background: #bfc2ce; color: #5c5f6c; }
.cmdtabs .on { background: #eceef4; color: #222; }
.docrow { display: flex; flex: 1; min-height: 0; }
.tree { position: relative; display: flex; flex-direction: column; flex: none; width: 151px; border-right: 2px solid #84889c; background: #e2e4ed; font: 9px/14px "Noto Sans", sans-serif; color: #16171f; }
.treetabs { display: flex; align-items: flex-end; height: 25px; padding-left: 1px; background: #cfd2df; border-top: 1px solid #9295a6; }
.treetabs button { display: grid; place-items: center; width: 22px; height: 19px; border: 1px solid #8d90a3; border-bottom: 0; border-radius: 3px 3px 0 0; background: #b9bccb; }
.treetabs .on { background: #eff1f7; }
.treetabs span { margin-left: auto; padding: 0 3px 4px; font-size: 13px; }
.filter { display: flex; align-items: center; height: 14px; margin: 1px 0 2px 1px; padding-left: 5px; border: 1px solid #7787a6; border-radius: 7px; background: #fff; }
.filter svg { width: 10px; height: 10px; }
.filter input { flex: 1; min-width: 0; }
.root { display: flex; align-items: center; gap: 3px; height: 14px; padding-left: 2px; white-space: nowrap; }
.root .ic { width: 13px; height: 13px; }
.nodes { position: relative; display: grid; grid-auto-rows: 14px 15px 14px; border-bottom: 2px solid #4f78b4; white-space: nowrap; }
.nodes::before { content: ""; position: absolute; left: 8px; top: 0; bottom: 8px; border-left: 1px dotted #7d8190; }
.nodes li { position: relative; display: flex; align-items: center; gap: 4px; padding-left: 17px; }
.nodes li::before { content: ""; position: absolute; left: 9px; width: 8px; border-top: 1px dotted #7d8190; }
.nodes .plus::after { content: "+"; position: absolute; left: 5px; width: 7px; height: 7px; border: 1px solid #8a8e9c; background: #fff; font: 7px/5px "Liberation Sans", sans-serif; text-align: center; }
.nodes svg { width: 12px; height: 12px; }
.hscroll { display: flex; align-items: center; gap: 5px; height: 14px; margin-top: auto; padding: 0 4px; background: #f1f1f3; }
.hscroll span { width: 56px; height: 12px; border: 1px solid #a5a5a9; border-radius: 2px; background: repeating-linear-gradient(90deg, #666 0 1px, transparent 1px 3px) center/7px 5px no-repeat, linear-gradient(#fbfbfb, #d6d6da); }
.la, .ra { border: 3px solid transparent; }
.la { border-right: 4px solid #333; border-left: 0; }
.ra { border-left: 4px solid #333; border-right: 0; margin-left: auto; }
.grip { position: absolute; right: -8px; top: 262px; width: 7px; height: 23px; border: 1px solid #7d8195; border-radius: 0 3px 3px 0; background: repeating-linear-gradient(#49608e 0 2px, transparent 2px 6px) center/2px 14px no-repeat, #d4d7e4; }
.view { position: relative; flex: 1; min-width: 0; border-bottom: 1px solid #85889a; }
.model { width: 100%; height: 100%; }
.hud { position: absolute; top: -11px; left: 0; right: 0; display: flex; justify-content: center; gap: 5px; }
.hud button { display: flex; align-items: center; gap: 4px; }
.hud .ic { width: 13px; height: 13px; }
.docbtns { position: absolute; top: -8px; right: 8px; display: flex; gap: 9px; }
.sidetabs { position: absolute; right: 0; top: 32px; display: flex; flex-direction: column; }
.sidetabs button { display: grid; place-items: center; width: 18px; height: 19px; border: 1px solid #797d92; border-right: 0; border-radius: 3px 0 0 3px; background: #bfc2d0; }
.sidetabs .on { background: #eef0f6; }
.sheets { display: flex; height: 12px; flex: none; background: #e3e6ef; font: 10px/11px "Liberation Sans", Arial, sans-serif; }
.nav { display: grid; place-items: center; width: 13px; height: 12px; border: 1px solid #9699aa; background: #bfc2ce; }
.nav svg { width: 9px; height: 9px; }
.flip svg { transform: rotate(180deg); }
.sheet { height: 12px; padding: 0 7px; border: 1px solid #6b6e80; border-top: 0; background: #c3c6d2; }
.sheet:last-child { padding: 0 8px 0 5px; }
.sheet.on { margin-left: 2px; background: #eceef4; font-weight: bold; color: #111; }

/* Task pane */
.pane { display: flex; flex-direction: column; flex: none; width: 194px; border-left: 2px solid #6b7390; background: #dfe2ec; }
.pane h1 { display: flex; align-items: center; justify-content: center; position: relative; flex: none; height: 17px; margin: 0; background: linear-gradient(#e6e8f2, #bfc2d4); border-bottom: 1px solid #a6a9bb; font: bold 9px/14px "Noto Sans", sans-serif; color: #2b2e68; padding-right: 12px; }
.pane h1 svg { position: absolute; right: 0; width: 13px; height: 13px; }
.panebody { display: flex; flex: 1; min-height: 0; }
.groups { flex: 1; min-width: 0; padding: 4px 9px 0 10px; overflow: hidden; font: 9px/11px "Liberation Sans", Arial, sans-serif; color: #111330; }
.group { margin-bottom: 16px; border: 1px solid #a5a9bf; border-radius: 3px 3px 0 0; background: linear-gradient(#c9cee0, #e6e9f4 130px); }
.group h2 { display: flex; align-items: center; justify-content: space-between; height: 18px; margin: 0; padding: 0 2px 0 4px; background: linear-gradient(#ebecf1, #c1c3cf); font: bold 9px/18px "DejaVu Sans Condensed", "DejaVu Sans", sans-serif; color: #4e5160; }
.group h2 svg { width: 8px; height: 8px; }
.links { padding-bottom: 1px; }
.links a { display: flex; align-items: center; gap: 2px; height: 18px; padding-left: 2px; white-space: nowrap; }
.links.tight { padding-bottom: 3px; }
.links.tight a { height: 17px; }
.news { padding: 1px 0 4px 24px; font: 8px/10px "Noto Sans", sans-serif; color: #3f6390; white-space: nowrap; }
.news li { position: relative; display: flex; align-items: center; margin-bottom: 3px; }
.news li::before { content: ""; position: absolute; left: -6px; width: 4px; height: 4px; border: 1px solid #e08a2c; border-left: 0; border-bottom: 0; transform: rotate(45deg); }
.news .all { margin: 5px 12px 0 0; padding-top: 5px; border-top: 1px solid #a9b0c6; }
.vendor label { display: block; padding: 0 2px 0 15px; text-indent: 2px; }
.vendor label .ic { float: left; margin-left: -14px; }
.vrow { display: flex; align-items: center; gap: 4px; padding: 1px 0 0 18px; }
.vrow input { width: 84px; height: 17px; border: 1px solid #8d90a0; border-top-color: #444; background: #fff; }
.vendor p { margin: 1px 30px 0 1px; padding-bottom: 5px; font-size: 8px; line-height: 10px; color: #71758a; }
.vendor p a { text-decoration: underline; }
.partners { display: flex; gap: 2px; margin: 0 8px 0 2px; padding-top: 7px; border-top: 1px solid #a9b0c6; }
.vscroll { display: flex; flex-direction: column; align-items: center; gap: 4px; width: 12px; padding-top: 5px; background: #f0f1f4; }
.vscroll span { width: 11px; height: 380px; border: 1px solid #9a9ca6; background: repeating-linear-gradient(#555 0 1px, transparent 1px 3px) center/5px 7px no-repeat, linear-gradient(90deg, #fafafa, #d2d3d8); }
.ua, .da { border: 3px solid transparent; }
.ua { border-bottom: 3px solid #333; border-top: 0; }
.da { border-top: 3px solid #333; border-bottom: 0; margin-top: auto; margin-bottom: 5px; }

/* Status bar */
.status { display: flex; align-items: center; flex: none; height: 16px; padding: 0 11px 0 1px; border-top: 1px solid #7c7f90; background: linear-gradient(#dddfe9, #c0c2d6); font: 9px/14px "Noto Sans", sans-serif; color: #1a1b26; }
.status .mode { margin-left: auto; padding: 0 10px; border: solid #b1b4c8; border-width: 0 1px; }
.status .ic { width: 12px; height: 12px; margin-left: 15px; }
.status .tag { margin-left: 40px; }

/* Taskbar */
.taskbar { display: flex; align-items: center; flex: none; height: 32px; border-top: 1px solid #3a4d60;
  background:
    linear-gradient(rgba(255,255,255,.22), transparent 30%),
    radial-gradient(16px 20px at 40.5% 95%, #b9cbe8 50%, transparent),
    radial-gradient(24px 22px at 48% 95%, #a8bcde 60%, transparent),
    radial-gradient(14px 20px at 53.2% 60%, #bed3ea 30%, transparent),
    radial-gradient(30px 34px at 64% 50%, #8f98a4, transparent),
    radial-gradient(30px 34px at 68% 60%, #7c817e, transparent),
    radial-gradient(16px 26px at 78.6% 45%, #a7bacd 30%, transparent),
    radial-gradient(40px 30px at 30% 70%, #16262c, transparent),
    radial-gradient(90px 22px at 91% 110%, #5f83b3, transparent),
    linear-gradient(90deg, #31464f 0, #526a78 22%, #1e3441 29%, #2c4656 33%, #4a5c84 38%, #4258a2 44%, #4a60ac 55%, #45588e 61%, #3a4b52 65%, #232f37 73%, #3c5688 76%, #34506e 82%, #1b2d3b 88%, #2c4a6a); }
.start { width: 30px; height: 30px; margin-left: 6px; }
.start svg { width: 30px; height: 30px; }
.wmp { width: 24px; margin: 0 16px 0 21px; }
.wmp svg { width: 22px; height: 22px; }
.app { display: grid; place-items: center; width: 48px; height: 31px; margin-right: 2px; border: 1px solid #8797a3; border-radius: 2px; background: linear-gradient(135deg, rgba(255,255,255,.4), rgba(255,255,255,.12)); }
.app svg { width: 26px; height: 24px; }
.lit { background: linear-gradient(135deg, rgba(255,255,255,.8), rgba(255,255,255,.4)); border-color: #d6dee4; }
.tray { display: flex; align-items: center; height: 100%; margin-left: auto; color: #fff; font: 9px/13px "Noto Sans", sans-serif; gap: 6px; }
.lang { margin-right: 7px; }
.up { border: 3px solid transparent; border-top: 0; border-bottom-color: #fff; margin-right: 4px; }
.tray time { margin-left: 7px; text-align: center; }
.desk { width: 11px; height: 30px; border: 1px solid #61788c; background: rgba(255,255,255,.1); margin: 0 1px 0 2px; }
```
